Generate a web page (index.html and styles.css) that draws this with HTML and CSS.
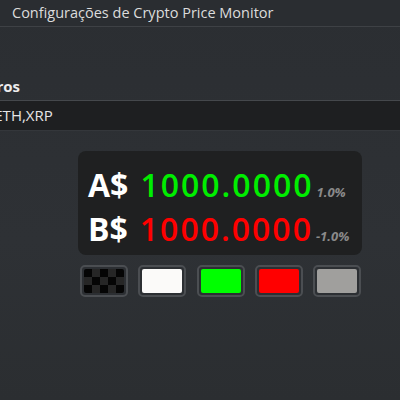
FILE: index.html
```html
<!DOCTYPE html>
<html lang="pt">
<head>
    <meta charset="UTF-8">
    <meta name="viewport" content="width=device-width, initial-scale=1.0">
    <title>Configurações de Crypto Price Monitor</title>
    <link rel="stylesheet" href="styles.css">
</head>
<body>
    <div class="titlebar">Configurações de Crypto Price Monitor</div>

    <div class="content">
        <h2 class="section-title">Parâmetros</h2>
        <div class="coins-field">BTC,ETH,XRP</div>

        <div class="preview-wrap">
            <div class="preview">
                <div class="price-row">
                    <span class="symbol">A$</span>
                    <span class="value up">1000.0000</span>
                    <span class="change">1.0%</span>
                </div>
                <div class="price-row">
                    <span class="symbol">B$</span>
                    <span class="value down">1000.0000</span>
                    <span class="change">-1.0%</span>
                </div>
            </div>

            <div class="swatches">
                <button class="swatch"><span class="fill checker"></span></button>
                <button class="swatch"><span class="fill white"></span></button>
                <button class="swatch"><span class="fill green"></span></button>
                <button class="swatch"><span class="fill red"></span></button>
                <button class="swatch"><span class="fill grey"></span></button>
            </div>
        </div>
    </div>
</body>
</html>
```

FILE: styles.css
```css
html, body {
    margin: 0;
    height: 100%;
}
body {
    font-family: "Open Sans", "Noto Sans", sans-serif;
    background: linear-gradient(180deg, #2b2e32 0%, #2e3135 60%, #2b2e31 100%);
    color: #e8e8e8;
    overflow: hidden;
}
.titlebar {
    height: 26px;
    line-height: 26px;
    padding-left: 12px;
    font-size: 14.5px;
    color: #dcdcdc;
    background: #2a2d31;
    border-bottom: 1px solid #3e4145;
}
.content {
    padding-top: 47px;
}
.section-title {
    margin: 0 0 0 -68px;
    height: 26px;
    font-size: 15px;
    font-weight: bold;
    line-height: 24px;
    color: #ececec;
    border-bottom: 1px solid #45484c;
}
.coins-field {
    height: 29px;
    line-height: 29px;
    margin-left: -37px;
    font-size: 15px;
    color: #e6e6e6;
    background: #1e1f21;
    border-bottom: 1px solid #34373b;
}
.preview-wrap {
    width: 284px;
    margin: 20px 0 0 78px;
}
.preview {
    height: 104px;
    box-sizing: border-box;
    padding: 12px 10px 0 10px;
    background: #1f2021;
    border-radius: 8px;
}
.price-row {
    display: flex;
    align-items: baseline;
    height: 44px;
    line-height: 44px;
}
.symbol {
    font-size: 32px;
    font-weight: bold;
    color: #ffffff;
    margin-right: 12px;
}
.value {
    font-size: 32px;
    font-weight: 600;
    letter-spacing: 2px;
    margin-right: 3px;
}
.up {
    color: #00ee00;
}
.down {
    color: #ff0000;
}
.change {
    font-size: 13px;
    font-style: italic;
    font-weight: bold;
    color: #8a8a8a;
}
.swatches {
    display: flex;
    justify-content: space-between;
    margin-top: 10px;
    padding: 0 1px 0 2px;
}
.swatch {
    width: 48px;
    height: 32px;
    padding: 2px;
    border: 2px solid #4b4e52;
    border-radius: 5px;
    background: #2c2f33;
    box-sizing: border-box;
    display: flex;
}
.fill {
    flex: 1;
    border-radius: 2px;
}
.checker {
    background-color: #050505;
    background-image:
        linear-gradient(45deg, #262626 25%, transparent 25%, transparent 75%, #262626 75%),
        linear-gradient(45deg, #262626 25%, transparent 25%, transparent 75%, #262626 75%);
    background-size: 16px 16px;
    background-position: 0 0, 8px 8px;
}
.white {
    background: #fbfaf9;
}
.green {
    background: #00ff00;
}
.red {
    background: #ff0000;
}
.grey {
    background: #a09f9d;
}
```
